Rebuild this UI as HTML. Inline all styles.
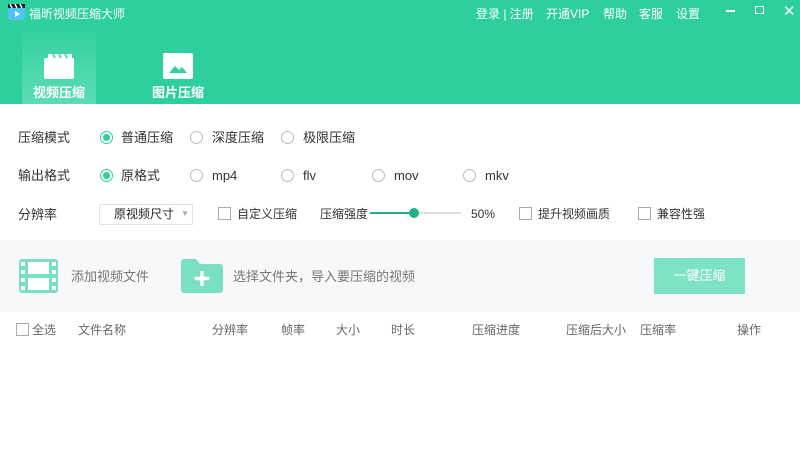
<!DOCTYPE html><html><head><meta charset="utf-8"><style>
*{margin:0;padding:0;box-sizing:border-box}
body{width:800px;height:454px;overflow:hidden;background:#fff;font-family:"Liberation Sans","Noto Sans CJK SC",sans-serif;font-size:12px;color:#333;position:relative}
.a{position:absolute;white-space:nowrap;line-height:1}
.hd{position:absolute;left:0;top:0;width:800px;height:104px;background:#2ecf9f}
.w{color:#fff}
.r{position:absolute;width:13px;height:13px;border:1px solid #bbb;border-radius:50%}
.r.on{border-color:#2ecf9f}.r.on::after{content:"";position:absolute;left:2px;top:2px;width:7px;height:7px;border-radius:50%;background:#2ecf9f}
.cb{position:absolute;width:13px;height:13px;border:1px solid #aaa;background:#fff}
.t{font-size:13px;color:#333}
.th{color:#666;font-size:12px}
</style></head><body>
<div class="hd"></div>
<div class="a" style="left:22px;top:32px;width:74px;height:72px;background:linear-gradient(#34d2a2,#5ddbb5)"></div>
<svg class="a" style="left:7px;top:3px" width="20" height="18"><rect x="1" y="4" width="17" height="13" rx="3" fill="#4fc3f7"/><rect x="1" y="1" width="17" height="4" fill="#222"/><path d="M3 1l2 4M8 1l2 4M13 1l2 4" stroke="#fff" stroke-width="1.4"/><path d="M8 8l5 3-5 3z" fill="#fff"/></svg>
<div class="a w" style="left:29px;top:8px;font-size:12px">福昕视频压缩大师</div>
<div class="a w" style="left:476px;top:8px">登录 | 注册</div>
<div class="a w" style="left:546px;top:8px">开通VIP</div>
<div class="a w" style="left:603px;top:8px">帮助</div>
<div class="a w" style="left:639px;top:8px">客服</div>
<div class="a w" style="left:676px;top:8px">设置</div>
<div class="a" style="left:726px;top:10px;width:9px;height:2px;background:#fff"></div>
<div class="a" style="left:755px;top:6px;width:9px;height:8px;border:1.5px solid #fff"></div>
<div class="a w" style="left:783px;top:4px;font-size:15px">✕</div>
<svg class="a" style="left:44px;top:54px" width="30" height="25"><rect x="0" y="4" width="30" height="21" rx="2" fill="#fff"/><path d="M4 0h24v4H4z" fill="#fff"/><path d="M9 0l2 4M15 0l2 4M21 0l2 4" stroke="#5ddbb5" stroke-width="2"/></svg>
<div class="a w" style="left:33px;top:86px;font-size:13px;font-weight:bold">视频压缩</div>
<svg class="a" style="left:163px;top:53px" width="30" height="26"><rect width="30" height="26" rx="2" fill="#fff"/><path d="M6 20l6-7 4 4 3-3 5 6z" fill="#2ecf9f"/></svg>
<div class="a w" style="left:152px;top:86px;font-size:13px;font-weight:bold">图片压缩</div>

<div class="a t" style="left:18px;top:131px">压缩模式</div>
<div class="r on" style="left:100px;top:131px"></div><div class="a t" style="left:121px;top:131px">普通压缩</div>
<div class="r" style="left:190px;top:131px"></div><div class="a t" style="left:212px;top:131px">深度压缩</div>
<div class="r" style="left:281px;top:131px"></div><div class="a t" style="left:303px;top:131px">极限压缩</div>

<div class="a t" style="left:18px;top:169px">输出格式</div>
<div class="r on" style="left:100px;top:169px"></div><div class="a t" style="left:121px;top:169px">原格式</div>
<div class="r" style="left:190px;top:169px"></div><div class="a t" style="left:212px;top:169px">mp4</div>
<div class="r" style="left:281px;top:169px"></div><div class="a t" style="left:303px;top:169px">flv</div>
<div class="r" style="left:372px;top:169px"></div><div class="a t" style="left:394px;top:169px">mov</div>
<div class="r" style="left:463px;top:169px"></div><div class="a t" style="left:485px;top:169px">mkv</div>

<div class="a t" style="left:18px;top:208px">分辨率</div>
<div class="a" style="left:99px;top:204px;width:94px;height:21px;border:1px solid #e3e3e3"></div>
<div class="a" style="left:114px;top:208px;font-size:12px;color:#222">原视频尺寸</div>
<div class="a" style="left:181px;top:210px;font-size:8px;color:#aaa">▼</div>
<div class="cb" style="left:218px;top:207px"></div><div class="a" style="left:237px;top:208px">自定义压缩</div>
<div class="a" style="left:320px;top:208px">压缩强度</div>
<div class="a" style="left:370px;top:212px;width:44px;height:2px;background:#20b18c"></div>
<div class="a" style="left:414px;top:212px;width:47px;height:2px;background:#ddd"></div>
<div class="a" style="left:409px;top:208px;width:10px;height:10px;border-radius:50%;background:#20b18c"></div>
<div class="a" style="left:471px;top:208px">50%</div>
<div class="cb" style="left:519px;top:207px"></div><div class="a" style="left:538px;top:208px">提升视频画质</div>
<div class="cb" style="left:638px;top:207px"></div><div class="a" style="left:657px;top:208px">兼容性强</div>

<div class="a" style="left:0;top:240px;width:800px;height:72px;background:#f7f8fa"></div>
<svg class="a" style="left:19px;top:259px" width="39" height="34"><rect width="39" height="34" rx="3" fill="#78e0c0"/><rect x="9" y="3" width="21" height="12" fill="#fff"/><rect x="9" y="19" width="21" height="12" fill="#fff"/><g fill="#fff"><rect x="2" y="3" width="4" height="4"/><rect x="2" y="11" width="4" height="4"/><rect x="2" y="19" width="4" height="4"/><rect x="2" y="27" width="4" height="4"/><rect x="33" y="3" width="4" height="4"/><rect x="33" y="11" width="4" height="4"/><rect x="33" y="19" width="4" height="4"/><rect x="33" y="27" width="4" height="4"/></g></svg>
<div class="a" style="left:71px;top:270px;font-size:13px;color:#777">添加视频文件</div>
<svg class="a" style="left:181px;top:259px" width="42" height="34"><path d="M0 3a3 3 0 0 1 3-3h12l4 5h20a3 3 0 0 1 3 3v23a3 3 0 0 1-3 3H3a3 3 0 0 1-3-3z" fill="#78e0c0"/><path d="M21 12v15M13.5 19.5h15" stroke="#fff" stroke-width="3.5"/></svg>
<div class="a" style="left:233px;top:270px;font-size:13px;color:#777">选择文件夹，导入要压缩的视频</div>
<div class="a" style="left:654px;top:258px;width:91px;height:36px;background:#7ee2c4;color:#fff;font-size:13px;text-align:center;line-height:36px">一键压缩</div>

<div class="cb" style="left:16px;top:323px"></div>
<div class="a th" style="left:32px;top:324px">全选</div>
<div class="a th" style="left:78px;top:324px">文件名称</div>
<div class="a th" style="left:212px;top:324px">分辨率</div>
<div class="a th" style="left:281px;top:324px">帧率</div>
<div class="a th" style="left:336px;top:324px">大小</div>
<div class="a th" style="left:391px;top:324px">时长</div>
<div class="a th" style="left:472px;top:324px">压缩进度</div>
<div class="a th" style="left:566px;top:324px">压缩后大小</div>
<div class="a th" style="left:640px;top:324px">压缩率</div>
<div class="a th" style="left:737px;top:324px">操作</div>
</body></html>
